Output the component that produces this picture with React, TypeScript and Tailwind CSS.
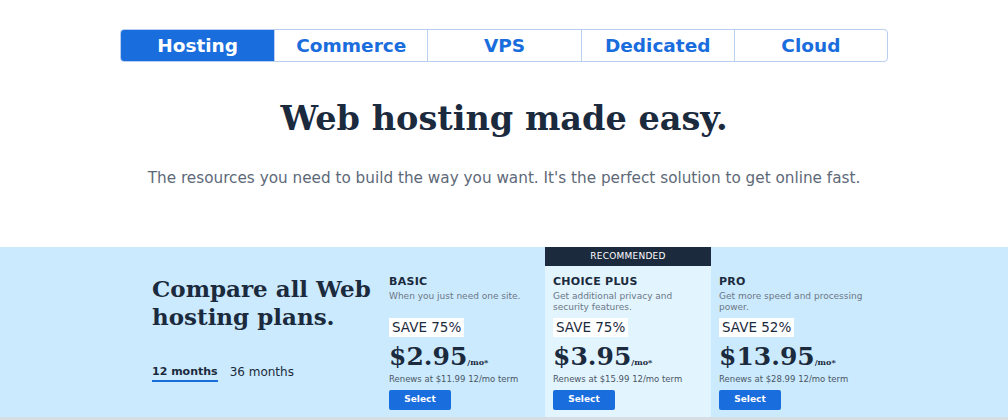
import React from 'react';

const sans = { fontFamily: '"DejaVu Sans", "Noto Sans", sans-serif' };
const serif = { fontFamily: '"DejaVu Serif", serif' };

type Plan = {
  name: string;
  desc: string;
  save: string;
  price: string;
  renew: string;
  recommended?: boolean;
};

const plans: Plan[] = [
  { name: 'BASIC', desc: 'When you just need one site.', save: 'SAVE 75%', price: '$2.95', renew: 'Renews at $11.99 12/mo term' },
  { name: 'CHOICE PLUS', desc: 'Get additional privacy and security features.', save: 'SAVE 75%', price: '$3.95', renew: 'Renews at $15.99 12/mo term', recommended: true },
  { name: 'PRO', desc: 'Get more speed and processing power.', save: 'SAVE 52%', price: '$13.95', renew: 'Renews at $28.99 12/mo term' },
];

const tabs = ['Hosting', 'Commerce', 'VPS', 'Dedicated', 'Cloud'];

const PlanColumn: React.FC<{ plan: Plan }> = ({ plan }) => (
  <div className={`flex flex-col h-[170px] ${plan.recommended ? 'bg-[#e2f4fe]' : ''}`}>
    {plan.recommended ? (
      <div className="h-[19px] bg-[#1b2a3d] text-white text-[9px] tracking-wide flex items-center justify-center">
        RECOMMENDED
      </div>
    ) : (
      <div className="h-[19px]" />
    )}
    <div className="pl-2 pr-3 pt-[9px] flex flex-col">
      <div className="text-[11px] leading-[14px] font-bold text-[#1b2a3d] tracking-wide">{plan.name}</div>
      <div className="h-[22px] mt-[2px] text-[9px] leading-[11px] text-[#6b7787]">{plan.desc}</div>
      <div className="mt-[5px] h-[19px] self-start bg-white px-[3px] text-[13.5px] leading-[19px] text-[#1b2a3d] font-medium">
        {plan.save}
      </div>
      <div className="mt-[8px] h-[24px] flex items-baseline text-[#1b2a3d]" style={serif}>
        <span className="text-[25px] leading-[24px] font-bold">{plan.price}</span>
        <span className="text-[8px] font-bold">/mo*</span>
      </div>
      <div className="mt-[4px] text-[8.5px] leading-[12px] text-[#4a5666]">{plan.renew}</div>
      <button className="mt-[5px] w-[62px] h-[20px] bg-[#1a6ddd] text-white text-[9px] font-bold rounded-[2px]">
        Select
      </button>
    </div>
  </div>
);

export default function App() {
  return (
    <div className="w-[1008px] h-[420px] bg-white overflow-hidden" style={sans}>
      <div className="pt-[29px] flex justify-center">
        <div className="w-[768px] h-[33px] grid grid-cols-5 border border-[#b8cff0] rounded-[4px] overflow-hidden">
          {tabs.map((t, i) => (
            <div
              key={t}
              className={`flex items-center justify-center text-[18.5px] font-semibold ${
                i === 0 ? 'bg-[#1a6ddd] text-white' : 'text-[#1a6ddd] border-l border-[#b8cff0]'
              }`}
            >
              {t}
            </div>
          ))}
        </div>
      </div>

      <h1 className="mt-[32px] text-center text-[33.5px] leading-[50px] font-bold text-[#1b2a3d]" style={serif}>
        Web hosting made easy.
      </h1>
      <p className="mt-[23px] text-center text-[15.25px] leading-[22px] text-[#5d6978]">
        The resources you need to build the way you want. It's the perfect solution to get online fast.
      </p>

      <div className="mt-[58px] h-[170px] bg-[#cbeafd] flex pl-[152px]">
        <div className="w-[725px] grid grid-cols-[229px_164px_166px_166px]">
          <div className="flex flex-col">
            <div className="pt-[28px] text-[23px] leading-[28px] font-bold text-[#1b2a3d]" style={serif}>
              Compare all Web
              <br />
              hosting plans.
            </div>
            <div className="mt-[33px] flex items-end gap-3 leading-[16px] text-[#1b2a3d]">
              <span className="text-[11px] font-bold border-b-2 border-[#1a6ddd]">12 months</span>
              <span className="text-[12px] pb-[2px]">36 months</span>
            </div>
          </div>
          {plans.map((p) => (
            <PlanColumn key={p.name} plan={p} />
          ))}
        </div>
      </div>
      <div className="h-[3px] bg-[#d6dde3]" />
    </div>
  );
}
